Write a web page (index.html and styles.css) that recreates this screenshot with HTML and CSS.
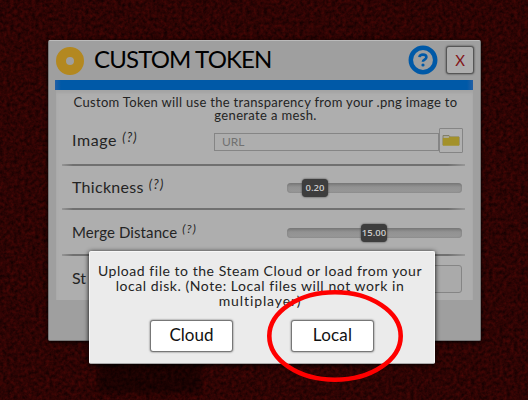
FILE: index.html
```html
<!DOCTYPE html>
<html lang="en">
<head>
<meta charset="utf-8">
<title>Custom Token</title>
<link rel="stylesheet" href="styles.css">
</head>
<body>
<main class="table">
  <svg class="felt" width="528" height="400" aria-hidden="true">
    <filter id="grain" x="0" y="0" width="100%" height="100%" color-interpolation-filters="sRGB">
      <feTurbulence type="fractalNoise" baseFrequency="0.28" numOctaves="3" seed="4"/>
      <feColorMatrix values="0.27 0 0 0 0.045  0.03 0 0 0 0  0.02 0 0 0 0.003  0 0 0 0 1"/>
    </filter>
    <rect width="528" height="400" filter="url(#grain)"/>
  </svg>
  <div class="shade"></div>
  <section class="window">
    <header class="head">
      <svg class="token" width="28" height="28" viewBox="0 0 28 28"><circle cx="14" cy="14" r="9" fill="none" stroke="#b38820" stroke-width="10"/></svg>
      <h1 class="title">CUSTOM TOKEN</h1>
      <svg class="help" width="30" height="30" viewBox="0 0 30 30"><circle cx="15" cy="15" r="12.2" fill="none" stroke="#0059a7" stroke-width="4.5"/><path d="M11.4 12.1c.3-1.8 1.8-2.5 3.6-2.5 2 0 3.4.9 3.4 2.6 0 2.5-3.5 2.2-3.5 4.6" fill="none" stroke="#0059a7" stroke-width="2.6"/><circle cx="15" cy="20" r="1.6" fill="#0059a7"/></svg>
      <button class="close">X</button>
    </header>
    <div class="bar"></div>
    <div class="content">
      <p class="intro"><span class="intro-a">Custom Token will use the transparency from your .png image to</span><span class="intro-b">generate a mesh.</span></p>
      <div class="row row-image">
        <span class="label image">Image</span><i class="hint">(?)</i>
        <div class="field">URL</div>
        <button class="browse"><svg width="18" height="13" viewBox="0 0 18 13"><path d="M1 11V1.5h6l1 1.5h9v8" fill="#aaa895" stroke="#77735a" stroke-width=".8"/><path d="M.8 4h5.7l1-1.2h9.7v9H.8z" fill="#a3912a"/></svg></button>
      </div>
      <div class="row row-thick">
        <span class="label thick">Thickness</span><i class="hint">(?)</i>
        <div class="slider"><span class="thumb low">0.20</span></div>
      </div>
      <div class="row row-merge">
        <span class="label merge">Merge Distance</span><i class="hint small">(?)</i>
        <div class="slider"><span class="thumb mid">15.00</span></div>
      </div>
      <div class="row row-last">
        <span class="label">St</span><div class="check"></div>
      </div>
    </div>
  </section>
  <section class="modal">
    <p class="message"><span class="msg-a">Upload file to the Steam Cloud or load from your</span><span class="msg-b">local disk. (Note: Local files will not work in</span><span class="msg-c">multiplayer)</span></p>
    <div class="choices"><button class="choice">Cloud</button><button class="choice local">Local</button></div>
  </section>
  <svg class="mark" width="138" height="94" viewBox="0 0 138 94"><ellipse cx="69" cy="47" rx="65.7" ry="43.7" fill="none" stroke="#f00" stroke-width="4.6"/></svg>
</main>
</body>
</html>
```
FILE: styles.css
```css
* { box-sizing: border-box; }
body { margin: 0; font-family: Lato, "Liberation Sans", sans-serif; color: #242424; }
button { font-family: inherit; padding: 0; margin: 0; }
.table { position: relative; width: 528px; height: 400px; overflow: hidden; background: #290202; }
.felt { position: absolute; inset: 0; }
.shade { position: absolute; left: 98px; top: 350px; width: 103px; height: 43px; background: #0006; filter: blur(2px); }
.window { position: absolute; left: 48px; top: 40px; width: 433px; height: 301px; background: #9f9f9f; border: 1px solid #777; border-top-color: #bbb; border-radius: 2px; box-shadow: 0 1px 4px #000; padding: 0 7px; }
.head { display: flex; align-items: center; height: 39px; }
.token { flex: none; }
.title { margin: -3px 0 0 10px; font-size: 24px; line-height: 30px; font-weight: 400; color: #000; letter-spacing: -0.85px; white-space: nowrap; }
.help { margin: -1px 0 0 auto; }
.close { width: 28px; height: 28px; margin: -1px -1px 0 8px; background: #aeaeae; border: 1px solid #565656; border-radius: 3px; box-shadow: 0 0 2px #333; color: #831519; font-size: 15px; }
.bar { height: 10px; margin-left: -1px; background: linear-gradient(90deg, #2460a5, #0059a7 6px, #0059a7 412px, #2460a5); }
.content { height: 210px; background: #aeaeae; padding: 6px 8px 0 6px; box-shadow: inset 0 3px 3px #a4a4a4; }
.intro { margin: 0; font-size: 13px; line-height: 13.4px; text-align: center; white-space: nowrap; height: 27px; padding-left: 4px; }
.intro span, .message span { display: block; }
.intro-a { letter-spacing: .31px; }
.intro-b { letter-spacing: .35px; }
.row { display: flex; align-items: center; padding-left: 10px; border-bottom: 2px solid #777; border-image: linear-gradient(90deg, #999, #707070 12px, #707070 385px, #999) 1; }
.row-image { height: 43px; padding-bottom: 7px; }
.row-thick { height: 44px; }
.row-merge { height: 46px; }
.row-last { height: 44px; border: 0; }
.label { font-size: 16px; line-height: 20px; white-space: nowrap; }
.image { letter-spacing: .6px; }
.thick { letter-spacing: .3px; }
.merge { font-size: 15px; letter-spacing: .1px; }
.hint { font-size: 13px; line-height: 16px; margin: -6px 0 0 5px; letter-spacing: 1.2px; }
.small { font-size: 12px; }
.field { width: 225px; height: 18px; margin: 4px 0 0 auto; padding-left: 7px; border: 1px solid #858585; font-size: 12px; line-height: 16px; color: #717171; }
.browse { display: flex; align-items: center; justify-content: center; width: 24px; height: 25px; margin-right: 2px; background: #b0b0b0; border: 1px solid #858585; border-radius: 1px; }
.slider { position: relative; width: 175px; height: 10px; margin: 1px 3px 0 auto; border-radius: 4px; background: linear-gradient(#777, #929292 40%, #989898); box-shadow: inset 0 0 2px #777; }
.thumb { position: absolute; top: -4px; width: 26px; height: 18px; border-radius: 4px; background: #3d3d3d; box-shadow: 0 0 2px #333; color: #ccc; font: 600 9.5px/18px "Open Sans", sans-serif; text-align: center; }
.low { left: 15px; }
.mid { left: 74px; }
.check { width: 60px; height: 28px; margin: 1px 3px 0 auto; border: 1px solid #858585; border-radius: 3px; background: #aaa; }
.modal { position: absolute; left: 89px; top: 251px; width: 346px; height: 113px; background: #ebebeb; border: 1px solid #f8f8f8; border-bottom-color: #aaa; border-radius: 2px; box-shadow: 0 1px 5px #000; padding-top: 11px; }
.message { margin: 0 0 0 -4px; height: 57px; font-size: 14px; line-height: 15px; text-align: center; white-space: nowrap; }
.msg-a { letter-spacing: .54px; }
.msg-b { letter-spacing: .56px; }
.msg-c { letter-spacing: .9px; }
.choices { display: flex; justify-content: center; gap: 58px; }
.choice { width: 83px; height: 32px; background: #fff; border: 1px solid #777; border-radius: 3px; box-shadow: 0 0 2px #555; color: #111; font-size: 17px; line-height: 26px; padding-bottom: 3px; }
.local { letter-spacing: .2px; }
.mark { position: absolute; left: 266px; top: 289px; }
```
